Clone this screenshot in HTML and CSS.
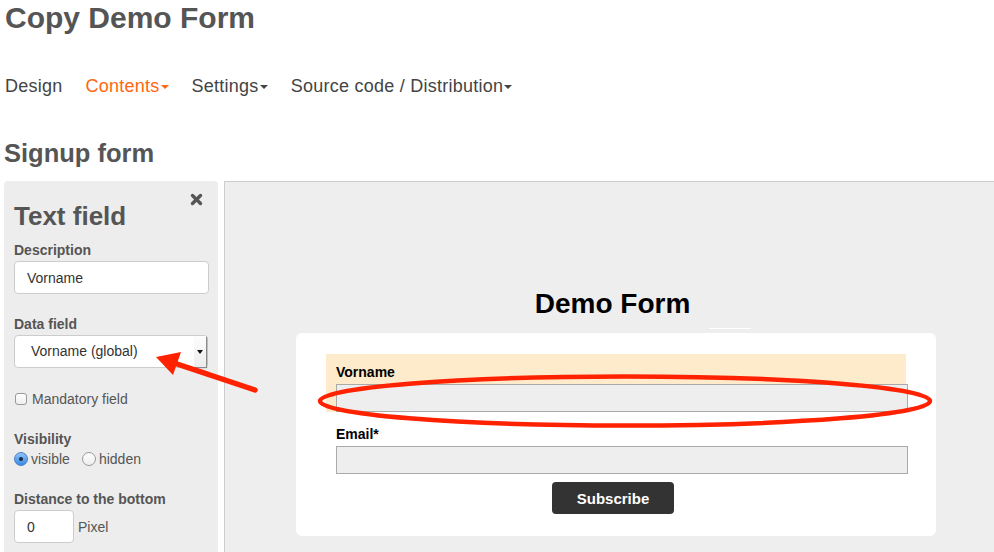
FILE: index.html
```html
<!DOCTYPE html>
<html lang="en">
<head>
    <meta charset="UTF-8">
    <meta name="viewport" content="width=device-width, initial-scale=1.0">
    <title>Copy Demo Form</title>
    <link rel="stylesheet" href="styles.css">
</head>
<body>
    <h1 class="page-title">Copy Demo Form</h1>

    <nav class="tabs">
        <a href="#" class="tab">Design</a>
        <a href="#" class="tab active has-menu">Contents</a>
        <a href="#" class="tab has-menu">Settings</a>
        <a href="#" class="tab has-menu">Source code / Distribution</a>
    </nav>

    <h2 class="section-title">Signup form</h2>

    <div class="workspace">
        <!-- properties of the selected field -->
        <aside class="editor">
            <button class="close" type="button">
                <svg width="13" height="13" viewBox="0 0 13 13">
                    <path d="M2.5 2.5 L10.5 10.5 M10.5 2.5 L2.5 10.5" stroke="#555" stroke-width="3.4" stroke-linecap="round"/>
                </svg>
            </button>
            <h3>Text field</h3>

            <label class="field-label">Description</label>
            <input class="text-input" type="text" value="Vorname">

            <label class="field-label data-label">Data field</label>
            <div class="select">
                <span class="select-value">Vorname (global)</span>
                <span class="select-btn"></span>
            </div>

            <label class="check-row">
                <span class="checkbox"></span>Mandatory field
            </label>

            <label class="field-label visibility-label">Visibility</label>
            <div class="radio-row">
                <span class="radio on"></span>visible
                <span class="radio second"></span>hidden
            </div>

            <label class="field-label distance-label">Distance to the bottom</label>
            <div class="distance-row">
                <input class="text-input small" type="text" value="0">
                <span>Pixel</span>
            </div>
        </aside>

        <!-- live preview of the form -->
        <section class="preview">
            <h2 class="form-title">Demo Form</h2>
            <div class="title-rule"></div>
            <form class="demo-card">
                <div class="form-row selected">
                    <label>Vorname</label>
                    <input type="text">
                </div>
                <div class="form-row">
                    <label>Email*</label>
                    <input type="text">
                </div>
                <div class="form-actions">
                    <button type="button">Subscribe</button>
                </div>
            </form>
        </section>
    </div>

    <!-- hand drawn marks on top of the page -->
    <svg class="marks" width="994" height="552" viewBox="0 0 994 552">
        <ellipse cx="625" cy="401" rx="305" ry="24.5" fill="none" stroke="#ff2200" stroke-width="4.5"/>
        <line x1="255" y1="390" x2="174" y2="363" stroke="#ff2200" stroke-width="5.5" stroke-linecap="round"/>
        <polygon points="156,357 181,352 173,375" fill="#ff2200"/>
    </svg>
</body>
</html>
```

FILE: styles.css
```css
body {
    font-family: "Liberation Sans", Arial, sans-serif;
    color: #555;
    margin: 0;
    padding-left: 4px;
    overflow: hidden;
}
.page-title {
    font-size: 30px;
    line-height: 36px;
    margin: 0;
    padding-left: 1px;
}
.tabs {
    display: flex;
    gap: 23px;
    margin-top: 40px;
    padding-left: 1px;
    font-size: 18px;
    line-height: 20px;
    letter-spacing: 0.25px;
}
.tab {
    color: #444;
    text-decoration: none;
    display: flex;
    align-items: center;
}
.tab.active {
    color: #ff6610;
}
.tab.has-menu::after {
    content: "";
    border-left: 4px solid transparent;
    border-right: 4px solid transparent;
    border-top: 4px solid currentColor;
    margin-left: 1px;
    margin-top: 2px;
}
.section-title {
    font-size: 25.5px;
    line-height: 30px;
    margin: 42px 0 13px;
}
.workspace {
    display: flex;
}

/* left editor panel */
.editor {
    position: relative;
    width: 214px;
    box-sizing: border-box;
    background: #ededed;
    border-radius: 4px 4px 0 0;
    padding: 20px 10px 10px;
    margin-right: 6px;
    font-size: 14px;
}
.close {
    position: absolute;
    top: 12px;
    right: 15px;
    padding: 0;
    border: none;
    background: none;
    line-height: 0;
    cursor: pointer;
}
.editor h3 {
    font-size: 26px;
    line-height: 30px;
    margin: 0 0 11px;
}
.field-label {
    display: block;
    font-weight: bold;
    line-height: 16px;
    margin-bottom: 3px;
}
.data-label {
    margin-top: 22px;
}
.visibility-label {
    margin-top: 24px;
}
.distance-label {
    margin-top: 23px;
}
.text-input {
    display: block;
    width: 195px;
    height: 33px;
    box-sizing: border-box;
    border: 1px solid #ccc;
    border-radius: 4px;
    background: #fff;
    padding: 0 12px;
    font-family: inherit;
    font-size: 14px;
    color: #333;
}
.text-input.small {
    width: 60px;
}
.select {
    display: flex;
    width: 194px;
    height: 33px;
    box-sizing: border-box;
    border: 1px solid #ccc;
    border-radius: 4px;
    background: #fff;
    color: #333;
}
.select-value {
    flex: 1;
    padding-left: 16px;
    line-height: 31px;
}
.select-btn {
    width: 12px;
    margin: 0 1px 0 0;
    background: linear-gradient(#fdfdfd, #ececec);
    box-shadow: 1px 1px 1px #8a8a8a;
    display: flex;
    align-items: center;
    justify-content: center;
}
.select-btn::after {
    content: "";
    border-left: 3px solid transparent;
    border-right: 3px solid transparent;
    border-top: 4px solid #111;
}
.check-row {
    display: flex;
    align-items: center;
    margin-top: 23px;
    line-height: 16px;
}
.checkbox {
    width: 10px;
    height: 10px;
    border: 1px solid #999;
    border-radius: 3px;
    background: linear-gradient(#fff, #eee);
    margin: 0 5px 0 1px;
}
.radio-row {
    display: flex;
    align-items: center;
    line-height: 18px;
    margin-top: 2px;
}
.radio {
    width: 12px;
    height: 12px;
    border: 1px solid #999;
    border-radius: 50%;
    background: linear-gradient(#fff, #eee);
    margin-right: 3px;
    position: relative;
}
.radio.second {
    margin-left: 12px;
}
.radio.on {
    border-color: #4a7fc0;
    background: linear-gradient(#8fc4f8, #3a8ae4);
}
.radio.on::after {
    content: "";
    position: absolute;
    left: 4px;
    top: 4px;
    width: 4px;
    height: 4px;
    border-radius: 50%;
    background: #1c2a3a;
}
.distance-row {
    display: flex;
    align-items: center;
    gap: 4px;
}

/* form preview */
.preview {
    flex: 1;
    background: #eee;
    border-top: 1px solid #ccc;
    border-left: 1px solid #ccc;
    padding: 106px 0 16px 71px;
    font-family: Arial, "Liberation Sans", sans-serif;
}
.form-title {
    width: 640px;
    box-sizing: border-box;
    padding-right: 7px;
    text-align: center;
    font-size: 28px;
    line-height: 32px;
    color: #000;
    margin: 0;
}
.title-rule {
    width: 42px;
    height: 1px;
    background: #fff;
    margin: 8px 0 4px 413px;
}
.demo-card {
    width: 640px;
    box-sizing: border-box;
    background: #fff;
    border-radius: 6px;
    padding: 21px 30px 22px;
    margin: 0;
}
.form-row {
    padding: 10px 0 0 10px;
    margin-bottom: 4px;
}
.form-row.selected {
    background: #feebcb;
}
.form-row label {
    display: block;
    font-size: 14px;
    font-weight: bold;
    line-height: 16px;
    color: #000;
    margin-bottom: 4px;
}
.form-row input {
    display: block;
    width: 572px;
    height: 28px;
    box-sizing: border-box;
    border: 1px solid #aaa;
    background: #eee;
    margin: 0;
}
.form-actions {
    display: flex;
    justify-content: center;
    padding-right: 6px;
    margin-top: 8px;
}
.form-actions button {
    width: 122px;
    height: 32px;
    border: none;
    border-radius: 4px;
    background: #333;
    color: #fff;
    font-family: inherit;
    font-size: 15px;
    font-weight: bold;
}
.marks {
    position: absolute;
    left: 0;
    top: 0;
    pointer-events: none;
}
```
